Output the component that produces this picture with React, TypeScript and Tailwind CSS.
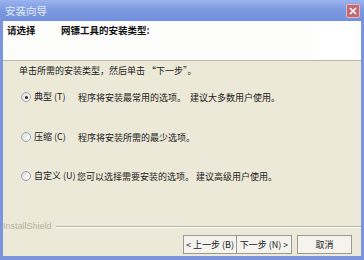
import React from "react";

const font = { fontFamily: '"Noto Sans CJK SC", "Liberation Sans", sans-serif' };

function Radio({ checked }: { checked?: boolean }) {
  return (
    <span className="relative inline-block w-[10px] h-[10px] rounded-full border border-[#9aa3ad] bg-gradient-to-br from-[#dcdbd3] to-white shrink-0">
      {checked && <span className="absolute left-[2.5px] top-[2.5px] w-[3px] h-[3px] rounded-full bg-[#222]" />}
    </span>
  );
}

function Option({ checked, label, desc, extra, descX }: { checked?: boolean; label: string; desc: string; extra?: string; descX: string }) {
  return (
    <div className="relative flex items-center h-[16px] text-[9px] text-[#222]">
      <div className="w-[18px] shrink-0" />
      <Radio checked={checked} />
      <span className="ml-[3px] whitespace-nowrap">{label}</span>
      <span className={`absolute top-[2px] whitespace-nowrap ${descX}`}>{desc}</span>
      {extra && <span className="absolute top-[2px] left-[187px] whitespace-nowrap">{extra}</span>}
    </div>
  );
}

export default function App() {
  return (
    <div className="w-[364px] h-[260px] bg-[#7a95dc] flex flex-col overflow-hidden" style={font}>
      <div className="h-[21px] shrink-0 flex items-center justify-between pl-[5px] pr-[4px] bg-gradient-to-b from-[#9cb4ee] via-[#7b98e0] to-[#7390de]">
        <span className="text-[10.5px] text-[#e6ecfa]">安装向导</span>
        <div className="w-[14px] h-[14px] rounded-[2px] bg-[#c06a74] border border-[#e8b8bc] flex items-center justify-center">
          <svg width="8" height="8" viewBox="0 0 8 8">
            <path d="M1 1 L7 7 M7 1 L1 7" stroke="white" strokeWidth="1.6" />
          </svg>
        </div>
      </div>
      <div className="flex-1 mx-[3px] mb-[4px] bg-[#ece9d8] flex flex-col">
        <div className="h-[40px] shrink-0 bg-[#fcfcfb] flex border-b border-[#b9b7a8]">
          <div className="flex-1 flex items-start pt-[2px] text-[9.5px] font-bold text-[#111]">
            <span className="ml-[4px] w-[54px]">请选择</span>
            <span>网镖工具的安装类型:</span>
          </div>
          <div className="w-[43px] bg-white mr-[5px]" />
        </div>
        <div className="flex flex-col">
          <div className="text-[9px] text-[#222] ml-[16px] mt-[2px] h-[16px] flex items-center whitespace-nowrap">单击所需的安装类型，然后单击 “下一步”。</div>
          <div className="mt-[10px]">
            <Option checked label="典型 (T)" desc="程序将安装最常用的选项。" extra="建议大多数用户使用。" descX="left-[75px]" />
          </div>
          <div className="mt-[24px]">
            <Option label="压缩 (C)" desc="程序将安装所需的最少选项。" descX="left-[75px]" />
          </div>
          <div className="mt-[23px]">
            <Option label="自定义 (U)" desc="您可以选择需要安装的选项。 建议高级用户使用。" descX="left-[74px]" />
          </div>
          <div className="flex items-center h-[12px] mt-[37px]">
            <span className="text-[9px] text-[#b5b2a3] ml-[0px]" style={{ fontFamily: '"Liberation Sans", sans-serif' }}>InstallShield</span>
            <div className="flex-1 ml-[4px] border-t border-[#b9b6a6] border-b border-b-white" />
          </div>
          <div className="flex justify-end mt-[2px] mr-[9px] text-[9px] text-[#222]">
            <button className="w-[53px] h-[19px] bg-[#f4f3ee] border border-[#9c9a8e] border-r-0 flex items-center justify-center whitespace-nowrap">&lt; 上一步 (B)</button>
            <button className="w-[56px] h-[19px] bg-[#f4f3ee] border border-[#9c9a8e] flex items-center justify-center whitespace-nowrap">下一步 (N) &gt;</button>
            <button className="w-[55px] h-[19px] ml-[5px] bg-[#f4f3ee] border border-[#9c9a8e] flex items-center justify-center">取消</button>
          </div>
        </div>
      </div>
    </div>
  );
}
